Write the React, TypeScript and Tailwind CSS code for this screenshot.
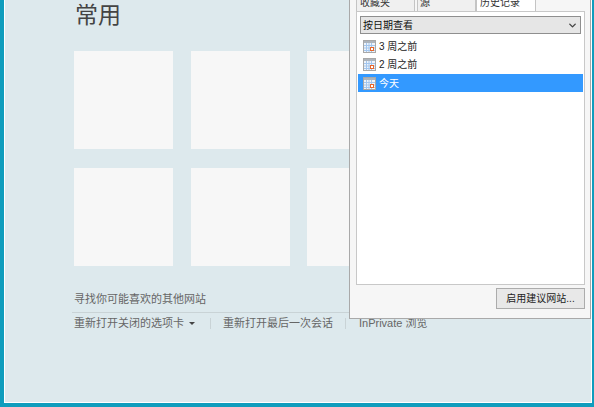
import { ChevronDown } from "lucide-react";

const FONT = "font-['Liberation_Sans','Noto_Sans_CJK_SC',sans-serif]";

function CalendarIcon() {
  return (
    <svg width="13" height="13" viewBox="0 0 13 13" className="shrink-0">
      <rect x="0.5" y="0.5" width="12" height="12" fill="#eef3f9" stroke="#a8a8a8" />
      <rect x="1" y="1" width="11" height="2" fill="#adb4bc" />
      <path d="M1 5.5h11M1 8h11M1 10.5h11M3.5 3v9M6 3v9M8.5 3v9" stroke="#a3c6ee" strokeWidth="1" />
      <rect x="7" y="7" width="4" height="4" fill="#e8662a" />
      <rect x="8" y="8" width="2" height="2" fill="#fff" />
    </svg>
  );
}

function Tile() {
  return <div className="h-[98px] w-[99px] shrink-0 bg-[#f7f7f7]" />;
}

function HistoryRow({ label, active }: { label: string; active?: boolean }) {
  return (
    <div
      className={`flex h-[18px] items-center gap-[3px] pl-[5px] text-[10px] ${
        active ? "mt-px bg-[#3399ff] text-white" : "text-[#222]"
      }`}
    >
      <CalendarIcon />
      <span>{label}</span>
    </div>
  );
}

export default function App() {
  return (
    <div className={`relative h-[407px] w-[594px] overflow-hidden bg-[#0f9dbd] ${FONT}`}>
      <div className="relative ml-1 mr-[2px] h-[403px] overflow-hidden border-x border-b border-white bg-[#dde9ed]">
        <div className="pl-[69px]">
          <h1 className="ml-px h-[30px] text-[23px] leading-[31px] text-[#444]">常用</h1>
          <div className="mt-[21px] grid w-[400px] grid-cols-[99px_99px_99px] gap-x-[17.5px] gap-y-[19px]">
            <Tile />
            <Tile />
            <Tile />
            <Tile />
            <Tile />
            <Tile />
          </div>
          <p className="mt-[25px] h-[16px] text-[11px] leading-[16px] text-[#666]">寻找你可能喜欢的其他网站</p>
          <div className="ml-[-2px] mt-[5px] h-px w-[280px] bg-[#c9d3d6]" />
          <div className="mt-px flex h-[18px] items-center whitespace-nowrap text-[11px] text-[#666]">
            <span>重新打开关闭的选项卡</span>
            <span className="ml-[5px] h-0 w-0 border-x-[3px] border-t-[3px] border-x-transparent border-t-[#444]" />
            <span className="ml-[15px] h-[11px] w-px bg-[#c9d3d6]" />
            <span className="ml-[12px]">重新打开最后一次会话</span>
            <span className="ml-[12px] h-[11px] w-px bg-[#c9d3d6]" />
            <span className="ml-[13px]">InPrivate 浏览</span>
          </div>
        </div>

        {/* favorites pane, sits over the page */}
        <div className="absolute left-[344px] top-[-7px] flex h-[326px] w-[242px] flex-col border border-[#a9a9a9] bg-[#f6f6f6] pl-[6px] pr-[5px] text-[10px] text-[#333]">
          <div className="flex h-[17px] items-end">
            <div className="flex h-[16px] w-[59px] items-center border border-b-0 border-[#c4c4c4] bg-[#f0f0f0] pb-[2px] pl-[3px]">收藏夹</div>
            <div className="ml-[2px] flex h-[16px] w-[59px] items-center border border-b-0 border-[#c4c4c4] bg-[#f0f0f0] pb-[2px] pl-[2px]">源</div>
            <div className="flex h-[17px] w-[60px] items-center border border-b-0 border-[#c4c4c4] bg-white pb-[2px] pl-[3px]">历史记录</div>
          </div>
          <div className="flex min-h-0 flex-1 flex-col border border-[#c8c8c8] bg-white">
            <div className="mx-[3px] mt-[4px] flex h-[18px] items-center justify-between border border-[#8f8f8f] bg-[#e6e6e6] px-[2px] text-[#111]">
              <span>按日期查看</span>
              <ChevronDown size={11} strokeWidth={3} className="text-[#444]" />
            </div>
            <div className="mt-[3px] px-px">
              <HistoryRow label="3 周之前" />
              <HistoryRow label="2 周之前" />
              <HistoryRow label="今天" active />
            </div>
          </div>
          <div className="flex h-[33px] shrink-0 items-start justify-end pt-[3px]">
            <button className="h-[21px] w-[89px] border border-[#acacac] bg-[#e8e8e8] text-[10px] text-[#222]">启用建议网站...</button>
          </div>
        </div>
      </div>
    </div>
  );
}
